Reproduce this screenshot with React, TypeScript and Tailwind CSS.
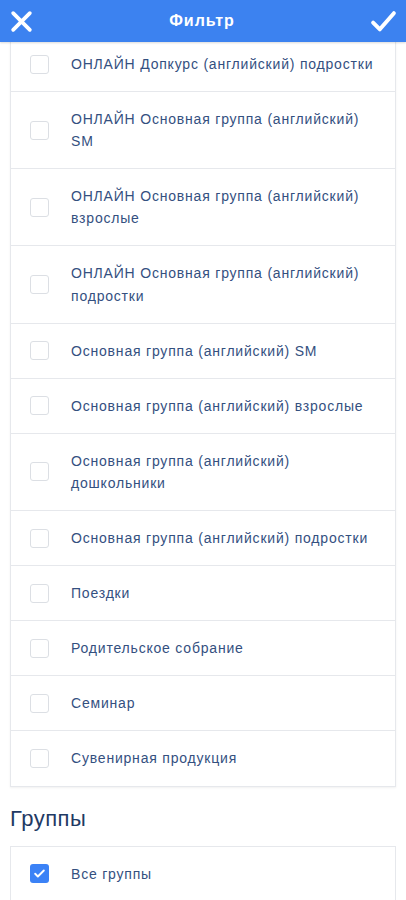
import React from "react";

type Item = { label: string; checked?: boolean };

const items: Item[] = [
  { label: "ОНЛАЙН Допкурс (английский) подростки" },
  { label: "ОНЛАЙН Основная группа (английский) SM" },
  { label: "ОНЛАЙН Основная группа (английский) взрослые" },
  { label: "ОНЛАЙН Основная группа (английский) подростки" },
  { label: "Основная группа (английский) SM" },
  { label: "Основная группа (английский) взрослые" },
  { label: "Основная группа (английский) дошкольники" },
  { label: "Основная группа (английский) подростки" },
  { label: "Поездки" },
  { label: "Родительское собрание" },
  { label: "Семинар" },
  { label: "Сувенирная продукция" },
];

function Box({ checked }: { checked?: boolean }) {
  if (checked) {
    return (
      <div className="w-[19px] h-[19px] shrink-0 rounded-[3px] bg-[#3b82f6] flex items-center justify-center">
        <svg width="13" height="13" viewBox="0 0 24 24" fill="none" stroke="white" strokeWidth="3.5" strokeLinecap="round" strokeLinejoin="round">
          <path d="M4 12.5l5 5L20 6.5" />
        </svg>
      </div>
    );
  }
  return <div className="w-[19px] h-[19px] shrink-0 rounded-[3px] border border-[#dcdfe4] bg-white" />;
}

function Row({ item, first }: { item: Item; first?: boolean }) {
  return (
    <div
      className={
        "flex items-center pl-[19px] pr-[17px] py-[16px] " +
        (first ? "" : "border-t border-[#e6e8ec]")
      }
    >
      <Box checked={item.checked} />
      <div className="ml-[22px] text-[14px] leading-[22.1px] tracking-[0.8px] text-[#34507f]">{item.label}</div>
    </div>
  );
}

export default function App() {
  return (
    <div
      className="w-[406px] h-[900px] overflow-hidden bg-white relative"
      style={{ fontFamily: "'Liberation Sans', Arial, sans-serif" }}
    >
      <div className="relative z-10 h-[42px] bg-[#3c82f0] flex items-center justify-between px-[9px] shadow-[0_1px_2px_rgba(0,0,0,0.15)]">
        <svg width="25" height="25" viewBox="0 0 24 24" fill="none" stroke="white" strokeWidth="3.6" strokeLinecap="round">
          <path d="M4 4L20 20M20 4L4 20" />
        </svg>
        <div className="text-white text-[16px] font-bold tracking-[1px]">Фильтр</div>
        <svg width="27" height="25" viewBox="0 0 26 24" fill="none" stroke="white" strokeWidth="3.8" strokeLinecap="round" strokeLinejoin="round">
          <path d="M3 13l6.5 6.5L23 4" />
        </svg>
      </div>
      <div className="-mt-[5px]">
        <div className="mx-[10px] border border-[#e6e8ec] border-t-0 bg-white shadow-[0_1px_2px_rgba(0,0,0,0.06)]">
          {items.map((it, i) => (
            <Row key={i} item={it} first={i === 0} />
          ))}
        </div>
        <div className="px-[10px] pt-[18px] pb-[14px] text-[22px] leading-[27px] tracking-[0.5px] text-[#1f3a64]">Группы</div>
        <div className="mx-[10px] border border-[#e6e8ec] bg-white">
          <Row item={{ label: "Все группы", checked: true }} first />
        </div>
      </div>
    </div>
  );
}
